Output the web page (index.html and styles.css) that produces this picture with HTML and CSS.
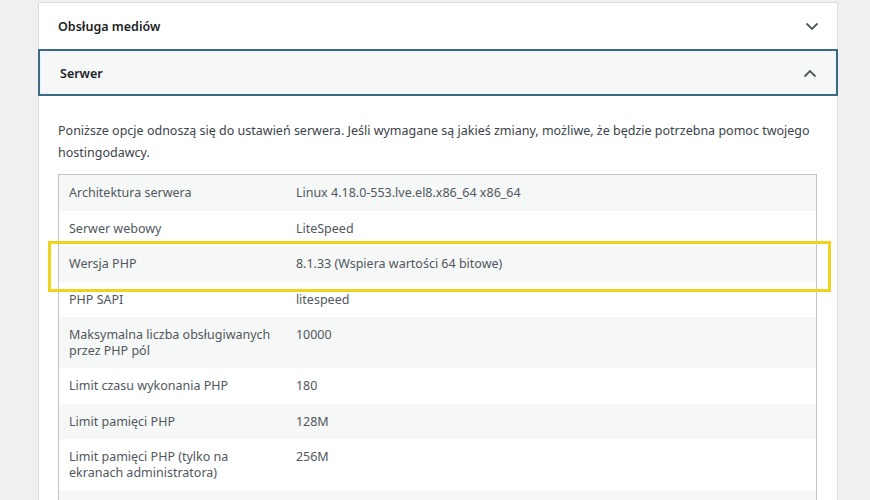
FILE: index.html
```html
<!DOCTYPE html>
<html lang="pl">
<head>
<meta charset="utf-8">
<link rel="stylesheet" href="styles.css">
</head>
<body>
<div class="panel">
  <div class="acc-head">
    <span class="acc-title">Obsługa mediów</span>
    <svg class="chev" width="14" height="9" viewBox="0 0 14 9"><path d="M1.5 1.5 L7 7 L12.5 1.5" fill="none" stroke="#50575e" stroke-width="1.8"/></svg>
  </div>
  <div class="acc-head open">
    <span class="acc-title">Serwer</span>
    <svg class="chev" width="14" height="9" viewBox="0 0 14 9"><path d="M1.5 7.5 L7 2 L12.5 7.5" fill="none" stroke="#50575e" stroke-width="1.8"/></svg>
  </div>
  <div class="acc-body">
    <p class="intro">Poniższe opcje odnoszą się do ustawień serwera. Jeśli wymagane są jakieś zmiany, możliwe, że będzie potrzebna pomoc twojego hostingodawcy.</p>
    <div class="table-wrap">
      <table class="info">
        <tr><td class="k">Architektura serwera</td><td>Linux 4.18.0-553.lve.el8.x86_64 x86_64</td></tr>
        <tr><td class="k">Serwer webowy</td><td>LiteSpeed</td></tr>
        <tr><td class="k">Wersja PHP</td><td>8.1.33 (Wspiera wartości 64 bitowe)</td></tr>
        <tr><td class="k">PHP SAPI</td><td>litespeed</td></tr>
        <tr><td class="k">Maksymalna liczba obsługiwanych przez PHP pól</td><td>10000</td></tr>
        <tr><td class="k">Limit czasu wykonania PHP</td><td>180</td></tr>
        <tr><td class="k">Limit pamięci PHP</td><td>128M</td></tr>
        <tr><td class="k">Limit pamięci PHP (tylko na ekranach administratora)</td><td>256M</td></tr>
        <tr><td class="k">&nbsp;</td><td>&nbsp;</td></tr>
      </table>
      <div class="highlight"></div>
    </div>
  </div>
</div>
</body>
</html>
```
FILE: styles.css
```css
html, body {
  margin: 0;
  padding: 0;
}
body {
  background: #f0f0f1;
  padding: 2px 0 0 38px;
  font-family: "Noto Sans", "Open Sans", sans-serif;
  color: #3c434a;
  overflow: hidden;
  height: 498px;
}
.panel {
  width: 798px;
  background: #fff;
  border-left: 1px solid #dcdcde;
  border-right: 1px solid #dcdcde;
  border-top: 1px solid #dcdcde;
  min-height: 600px;
}
.acc-head {
  height: 46px;
  display: flex;
  align-items: center;
  justify-content: space-between;
  padding: 1px 18px 0 19px;
  box-sizing: border-box;
}
.acc-head .acc-title {
  font-size: 12.5px;
  font-weight: 600;
  color: #1d2327;
}
.acc-head.open {
  height: 47px;
  margin: 0 -1px;
  padding: 1px 19px 0 20px;
  background: #f6f7f7;
  border: 2px solid #3d6a82;
  box-shadow: inset 0 0 0 1px #e6f3fa;
}
.chev {
  display: block;
}
.acc-body {
  padding: 24px 20px 0 19px;
}
.intro {
  margin: 0 0 10px;
  font-size: 12.5px;
  line-height: 22px;
  color: #3c434a;
  padding-right: 4px;
}
.table-wrap {
  position: relative;
}
.info {
  width: 100%;
  border-collapse: collapse;
  border: 1px solid #c3c4c7;
  font-size: 12.5px;
  color: #50575e;
}
.info td {
  padding: 10px 11px 10px 10px;
  line-height: 15.5px;
  vertical-align: top;
}
.info td.k {
  width: 30%;
}
.info tr:nth-child(odd) {
  background: #f6f7f7;
}
.highlight {
  position: absolute;
  left: -10px;
  top: 67px;
  width: 783px;
  height: 51px;
  box-sizing: border-box;
  border: 3.5px solid #f1d21c;
  pointer-events: none;
}
```
